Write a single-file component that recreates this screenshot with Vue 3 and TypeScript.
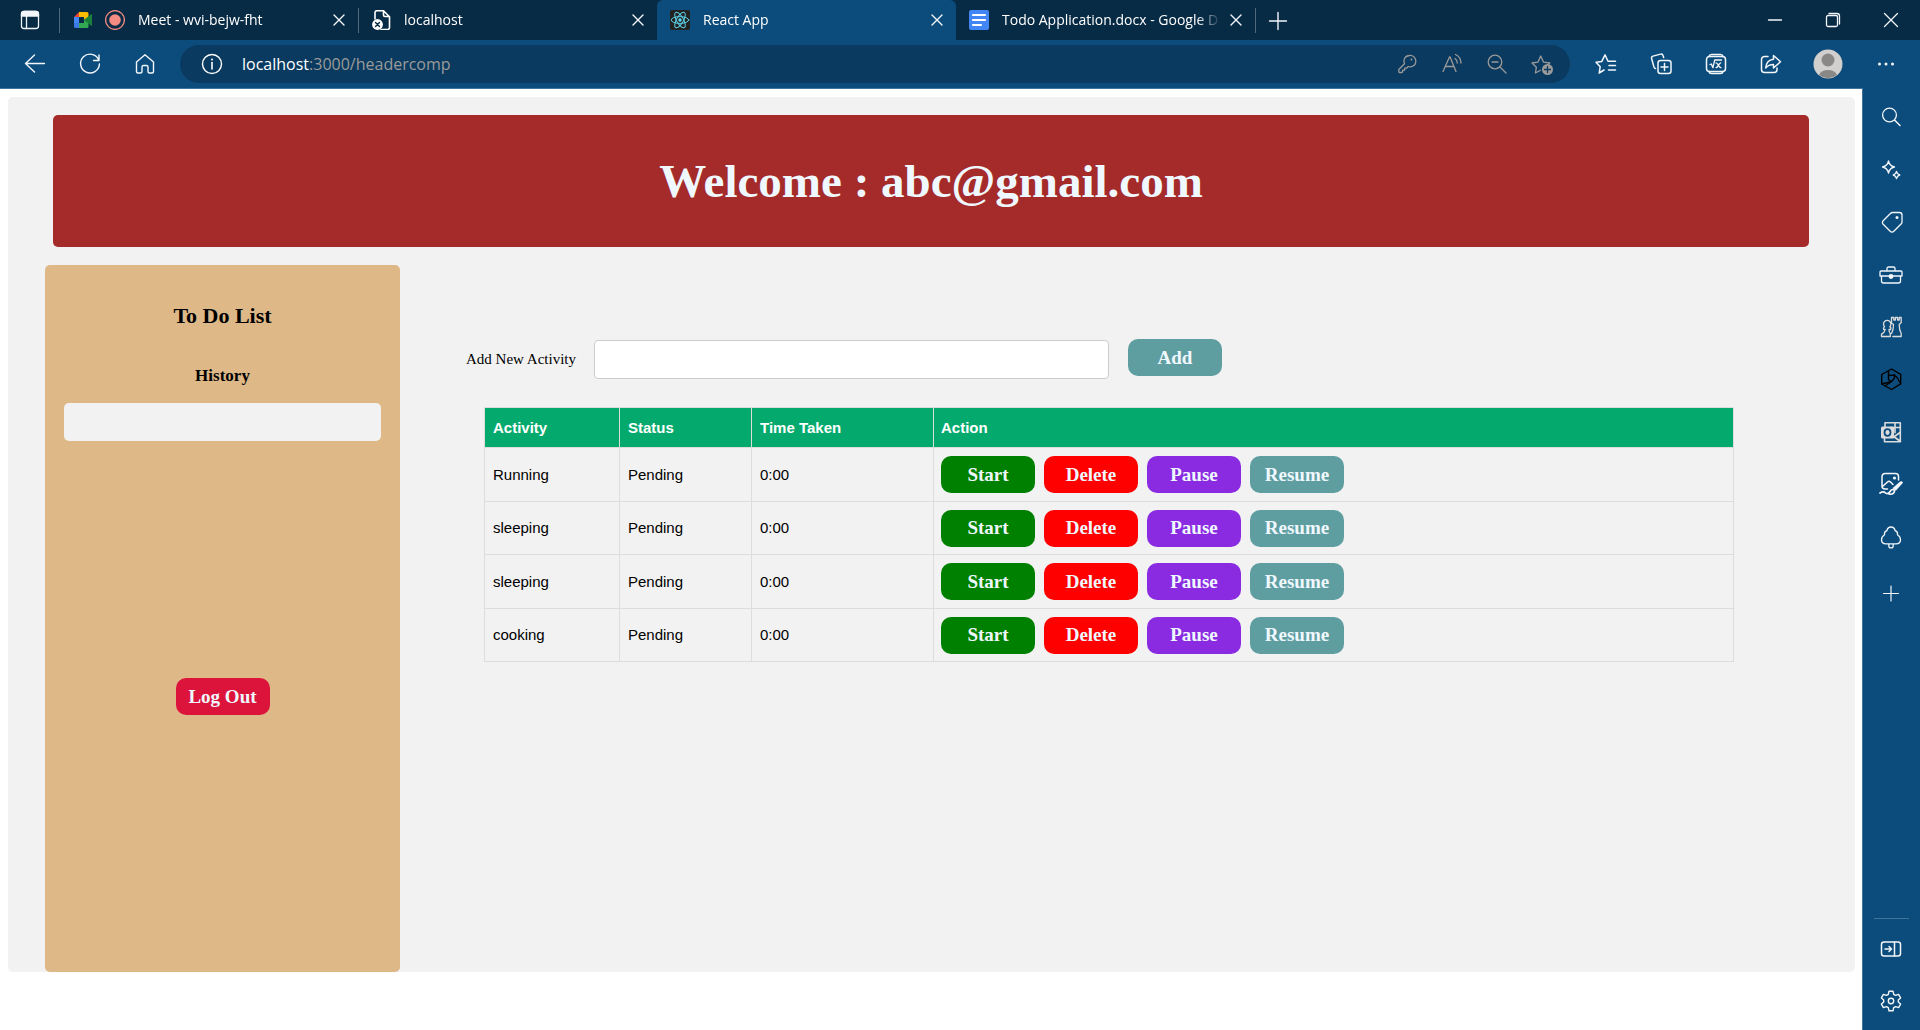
<script setup lang="ts">
import { ref } from 'vue'

interface Tab {
  title: string
  icons: string[]
  active?: boolean
}

interface Tool {
  name: string
  label: string
}

interface Activity {
  id: number
  name: string
  status: string
  time: string
}

const tabs: Tab[] = [
  { title: 'Meet - wvi-bejw-fht', icons: ['meet', 'record'] },
  { title: 'localhost', icons: ['fileError'] },
  { title: 'React App', icons: ['react'], active: true },
  { title: 'Todo Application.docx - Google D', icons: ['docs'] },
]

const windowTools: Tool[] = [
  { name: 'minimize', label: 'Minimize' },
  { name: 'restore', label: 'Restore' },
  { name: 'closeWindow', label: 'Close window' },
]

const navTools: Tool[] = [
  { name: 'back', label: 'Back' },
  { name: 'refresh', label: 'Refresh' },
  { name: 'home', label: 'Home' },
]

const addressTools: Tool[] = [
  { name: 'key', label: 'Saved passwords' },
  { name: 'readAloud', label: 'Read aloud' },
  { name: 'zoomOut', label: 'Zoom' },
  { name: 'starAdd', label: 'Add to favorites' },
]

const toolbarTools: Tool[] = [
  { name: 'favorites', label: 'Favorites' },
  { name: 'collections', label: 'Collections' },
  { name: 'math', label: 'Math solver' },
  { name: 'share', label: 'Share' },
]

const sideTools: Tool[] = [
  { name: 'search', label: 'Search' },
  { name: 'sparkle', label: 'Discover' },
  { name: 'tag', label: 'Shopping' },
  { name: 'toolbox', label: 'Tools' },
  { name: 'chess', label: 'Games' },
  { name: 'hexagon', label: 'Microsoft 365' },
  { name: 'outlook', label: 'Outlook' },
  { name: 'image', label: 'Image creator' },
  { name: 'tree', label: 'E-tree' },
]

const activities = ref<Activity[]>([
  { id: 1, name: 'Running', status: 'Pending', time: '0:00' },
  { id: 2, name: 'sleeping', status: 'Pending', time: '0:00' },
  { id: 3, name: 'sleeping', status: 'Pending', time: '0:00' },
  { id: 4, name: 'cooking', status: 'Pending', time: '0:00' },
])

const newActivity = ref('')

function addActivity() {
  const name = newActivity.value.trim()
  if (!name) return
  activities.value.push({ id: Date.now(), name, status: 'Pending', time: '0:00' })
  newActivity.value = ''
}

function setStatus(item: Activity, status: string) {
  item.status = status
}

function removeActivity(id: number) {
  activities.value = activities.value.filter((item) => item.id !== id)
}

/* Icon shapes on a 24 x 24 grid, stroked in the current text colour. */
const icons: Record<string, string> = {
  tabMenu:
    '<rect x="3.5" y="3.5" width="17" height="17" rx="2.5"/><path d="M3.5 6.5a3 3 0 0 1 3-3h11a3 3 0 0 1 3 3V8h-17z" fill="currentColor"/><path d="M8.500 8v12.500"/>',
  meet:
    '<g stroke="none"><path d="M4 9l5-5v5z" fill="#ea4335"/><path d="M9 4h8a1.500 1.500 0 0 1 1.500 1.500V9L14 12V9H9z" fill="#fbbc04"/><path d="M4 9h5v6H4z" fill="#4285f4"/><path d="M4 15h5v5H5.500A1.500 1.500 0 0 1 4 18.500z" fill="#3b78e7"/><path d="M9 15h5v-3l4.500-3.500v10A1.500 1.500 0 0 1 17 20H9z" fill="#34a853"/><path d="M18.500 8.500l2.700-2.200c.5-.4 1.300-.1 1.300.6v10.200c0 .7-.8 1-1.300.6l-2.700-2.200L14 12z" fill="#188038"/></g>',
  record:
    '<circle cx="12" cy="12" r="9.400" stroke="#f28b82" stroke-width="1.300"/><circle cx="12" cy="12" r="5.800" fill="#f28b82" stroke="none"/>',
  fileError:
    '<path d="M6 11V4.500A2 2 0 0 1 8 2.700h6.500l6 6V19.500a2 2 0 0 1-2 2H12M14.500 2.700V7a1.500 1.500 0 0 0 1.500 1.500h4.500" stroke-width="1.600"/><circle cx="8.500" cy="16.500" r="5.400" fill="currentColor" stroke="none"/><path d="M6.500 14.500l4 4m0-4l-4 4" stroke="#072a45" stroke-width="1.400"/>',
  react:
    '<rect x="2" y="2" width="20" height="20" rx="2" fill="#222" stroke="none"/><g stroke="#5ccfe6" stroke-width="1"><ellipse cx="12" cy="12" rx="8.800" ry="3.400"/><ellipse cx="12" cy="12" rx="8.800" ry="3.400" transform="rotate(60 12 12)"/><ellipse cx="12" cy="12" rx="8.800" ry="3.400" transform="rotate(120 12 12)"/></g><circle cx="12" cy="12" r="1.700" fill="#61dafb" stroke="none"/>',
  docs:
    '<rect x="2" y="2" width="20" height="20" rx="2" fill="#4285f4" stroke="none"/><path d="M6 7h12M6 12h12M6 17h8" stroke="#fff" stroke-width="2.200"/>',
  close: '<path d="M7 7l10 10M17 7L7 17" stroke-width="1.400"/>',
  plus: '<path d="M12 3.500v17M3.500 12h17" stroke-width="1.400"/>',
  minimize: '<path d="M5.500 12h13"/>',
  restore:
    '<rect x="5.500" y="7.500" width="11" height="11" rx="1.500"/><path d="M8 5.500h8a2.500 2.500 0 0 1 2.500 2.500v8"/>',
  closeWindow: '<path d="M5.500 5.500l13 13M18.500 5.500l-13 13"/>',
  back: '<path d="M21.500 11.500H2.500M11.500 3l-9 8.500 9 8.500" stroke-width="1.400"/>',
  refresh: '<path d="M20.700 8A9.400 9.400 0 1 0 21.400 12M21 3v5.500h-5.500" stroke-width="1.400"/>',
  home:
    '<path d="M3.500 10L12 2.800 20.500 10v9.500a1.500 1.500 0 0 1-1.500 1.500h-2.500a1.500 1.500 0 0 1-1.500-1.500V15a1.500 1.500 0 0 0-1.500-1.500h-3A1.500 1.500 0 0 0 9 15v4.500A1.500 1.500 0 0 1 7.500 21H5a1.500 1.500 0 0 1-1.500-1.500z" stroke-width="1.400"/>',
  info:
    '<circle cx="12" cy="12" r="9.500" stroke-width="1.400"/><path d="M12 10.500V17" stroke-width="1.600"/><circle cx="12" cy="7.500" r="1" fill="currentColor" stroke="none"/>',
  key:
    '<path d="M14.500 3.500a5.700 5.700 0 1 1-1.300 11l-1.700 1.700H9.700v2H7.600v1.600c0 .4-.3.700-.7.700H4.500a.7.700 0 0 1-.7-.7v-2.300l5.700-5.700A5.700 5.700 0 0 1 14.500 3.500z"/><circle cx="16.500" cy="7.500" r="1" fill="currentColor" stroke="none"/>',
  readAloud:
    '<path d="M3 19.500L9.500 5h.6L16 19.500M5.300 14.500h8.700M15 6.500c1.400.9 2.300 2.400 2.300 4.500M15.500 2.500c3.200 1.500 5.300 4.500 5.500 8.500"/>',
  zoomOut: '<circle cx="10" cy="10" r="6.800"/><path d="M15 15l6 6M7 10h6"/>',
  starAdd:
    '<path d="M10.500 18.300L5.400 21l1-5.800L2 11l6-.9L10.700 4l2.800 6.100 6.300.9-1.500 1.400"/><circle cx="17.500" cy="17.500" r="5.500" fill="currentColor" stroke="none"/><path d="M17.500 14.500v6M14.500 17.500h6" stroke="#0a3a5f"/>',
  favorites:
    '<path d="M10 18l-4.800 3 1-6.300L2 10.300l5.800-.9L11 2.800l3 6.400h7.500M15 13.500h6.500M14.500 18h7" stroke-width="1.500"/>',
  collections:
    '<path d="M6.500 16.500a2 2 0 0 1-1.500-1.400L2.600 6.500A2 2 0 0 1 4 4.100l7.500-2a2 2 0 0 1 2.500 1.400l.7 2" stroke-width="1.500"/><rect x="9" y="8.500" width="13" height="13" rx="2.500" stroke-width="1.500"/><path d="M15.500 11.500v7M12 15h7" stroke-width="1.500"/>',
  math:
    '<rect x="2.500" y="4.500" width="19" height="15" rx="3" stroke-width="1.500"/><path d="M5 4.500C5.300 3 6 2.500 7.500 2.500h9c1.500 0 2.200.5 2.500 2M5 19.500c.3 1.500 1 2 2.500 2h9c1.500 0 2.200-.5 2.500-2" stroke-width="1.500"/><path d="M6 12.500l1.300-.5 1.600 3.700 1.800-7.700h6.800M12 10.800c2.200 0 2.500 4.800 5 4.800M16.800 10.800c-2.200 0-2.300 4.800-4.800 4.800" stroke-width="1.300"/>',
  share:
    '<path d="M9 4.500H5.500a3 3 0 0 0-3 3v10a3 3 0 0 0 3 3H15a3 3 0 0 0 3-3V16M14.500 3.500l7 6.300-7 6.200v-3.600c-3.500 0-5.800 1-7.800 3.600.4-4.800 2.800-8.300 7.800-8.800z" stroke-width="1.500"/>',
  dots: '<g fill="currentColor" stroke="none"><circle cx="5.500" cy="12" r="1.500"/><circle cx="12" cy="12" r="1.500"/><circle cx="18.500" cy="12" r="1.500"/></g>',
  search: '<circle cx="10.500" cy="10" r="6.900"/><path d="M15.500 15l5.500 5.500" stroke-width="1.500"/>',
  sparkle:
    '<path d="M9.500 3c.8 3.700 2.300 5.200 6 6-3.700.8-5.200 2.300-6 6-.8-3.700-2.300-5.200-6-6 3.700-.8 5.200-2.300 6-6zM17.500 13.500c.5 2.200 1.300 3 3.300 3.500-2 .5-2.800 1.300-3.300 3.500-.5-2.200-1.300-3-3.300-3.500 2-.5 2.800-1.300 3.300-3.500z"/>',
  tag:
    '<path d="M13.500 2.500h7a2.500 2.500 0 0 1 2.500 2.500v7a2.500 2.500 0 0 1-.7 1.800l-7.500 7.500a2.500 2.500 0 0 1-3.600 0l-7-7a2.500 2.500 0 0 1 0-3.600l7.500-7.500a2.500 2.500 0 0 1 1.800-.7z"/><circle cx="18" cy="7.500" r="1.500" fill="currentColor" stroke="none"/>',
  toolbox:
    '<path d="M8 8V5.500A1.500 1.500 0 0 1 9.500 4h5A1.500 1.500 0 0 1 16 5.500V8M2 8h20a1 1 0 0 1 1 1v4H1V9a1 1 0 0 1 1-1zM2.500 13v5a2 2 0 0 0 2 2h15a2 2 0 0 0 2-2v-5"/><circle cx="12" cy="13.500" r="1.800" fill="currentColor"/>',
  chess:
    '<path d="M6.200 14.500H4.600c-.5-1.300.1-2.300 1-2.800a3.700 3.700 0 1 1 5.200 0c1 .5 1.300 1.500.8 2.800H10c0 2 .5 3.200 1.300 4v3H2.500v-2.300c2-1 3.300-2.500 3.700-4.700zM12.500 5v3l2 1.500c0 3.500-.5 6.500-2 9M12.500 5V2.500h2.300V5h1.600V2.500h2.200V5h1.600V2.500h2V7.500l-2 2c0 3.500.5 6.500 2 9v3h-8.400" stroke="#dcdcdc" stroke-width="1.300"/>',
  hexagon:
    '<g stroke="#000" stroke-width="1.400"><path d="M12.500 2l9.200 5.300v9.500L12.500 22.500 2.700 17V7.500zM9.500 3.700v8.800l3 2.200M9.500 8.500l6-.5 3 3 3 5.500M2.700 17l10-2.500 2.700-3.500V8M6 19l6.500-4.500"/></g>',
  outlook:
    '<path d="M6 7V2.700h15.300v19H5.500V17M12 7.500h9M16 2.700v10M14 17.500l7-5M14 16l7.500 5.500" stroke="#dcdcdc" stroke-width="1.600"/><rect x="2" y="6.500" width="13" height="12" rx="1.500" fill="#dcdcdc" stroke="none"/><ellipse cx="8.500" cy="12.500" rx="3" ry="3.300" stroke="#0c4c7c" stroke-width="1.800"/>',
  image:
    '<path d="M8.500 17H6a3 3 0 0 1-3-3V4.500a3 3 0 0 1 3-3h10.500a3 3 0 0 1 3 3V8M3.500 14.500l5-4.500c1-.9 2-.9 3 0l2.500 2.500" stroke-width="1.500"/><circle cx="15.500" cy="6" r="1.600" fill="currentColor" stroke="none"/><path d="M22.300 9.300c1 .1 1.800.8 1.500 1.700l-7 7.800-3.300-2.600 7.300-6.400c.4-.4.9-.6 1.500-.5z" fill="currentColor" stroke="none"/><path d="M1 21c2.500-1.500 4.500-1 5.500 0s3 .5 4-.8 1.500-2.700 3.300-2.700c1.500 0 2 1.700 1.200 3-1 1.600-3.500 2-5.500 1.200" stroke-width="1.700"/>',
  tree:
    '<path d="M12 2c-2 0-3.500 1.200-4.200 3.700-2 .8-2.600 2.300-2.300 4C3.500 11 2.500 13 2.500 14.700c0 2.500 2 4.100 4.500 4.100h10c2.500 0 4.500-1.600 4.500-4.100 0-1.700-1-3.700-3-5 .3-1.700-.3-3.200-2.300-4C15.500 3.200 14 2 12 2zM9.800 19v1.700a2 2 0 0 0 4.400 0V19"/>',
  addTool: '<path d="M12 5v15M4.500 12.500h15" stroke-width="1.200"/>',
  panel:
    '<rect x="2.500" y="5" width="19" height="14" rx="2.500" stroke-width="1.500"/><path d="M15.500 5v14M6 12h6.500M10 9.500l2.500 2.500-2.500 2.500" stroke-width="1.500"/>',
  gear:
    '<circle cx="12" cy="12" r="2.700" stroke-width="1.400"/><path d="M10 2.200h4l.7 3.100 1.900 1.100 3-1 2 3.500-2.300 2.100v2l2.300 2.100-2 3.500-3-1-1.900 1.100-.7 3.100h-4l-.7-3.100-1.900-1.100-3 1-2-3.500L4.700 13v-2L2.400 8.900l2-3.500 3 1 1.900-1.100z" stroke-width="1.400"/>',
}
</script>

<template>
  <div class="browser">
    <nav class="tab-bar" aria-label="Tabs">
      <button class="icon-btn tab-menu" aria-label="Tab actions">
        <svg viewBox="0 0 24 24" v-html="icons.tabMenu"></svg>
      </button>
      <div v-for="tab in tabs" :key="tab.title" class="tab" :class="{ active: tab.active }">
        <svg v-for="name in tab.icons" :key="name" class="tab-icon" viewBox="2 2 20 20" v-html="icons[name]"></svg>
        <span class="tab-title">{{ tab.title }}</span>
        <button class="icon-btn tab-close" :aria-label="'Close ' + tab.title">
          <svg viewBox="0 0 24 24" v-html="icons.close"></svg>
        </button>
      </div>
      <button class="icon-btn new-tab" aria-label="New tab">
        <svg viewBox="0 0 24 24" v-html="icons.plus"></svg>
      </button>
      <div class="window-tools">
        <button v-for="tool in windowTools" :key="tool.name" class="icon-btn wide" :aria-label="tool.label">
          <svg viewBox="0 0 24 24" v-html="icons[tool.name]"></svg>
        </button>
      </div>
    </nav>

    <div class="toolbar">
      <button v-for="tool in navTools" :key="tool.name" class="icon-btn medium" :aria-label="tool.label">
        <svg viewBox="0 0 24 24" v-html="icons[tool.name]"></svg>
      </button>
      <div class="address">
        <svg viewBox="0 0 24 24" v-html="icons.info"></svg>
        <span class="url">localhost<span class="url-rest">:3000/headercomp</span></span>
        <button v-for="tool in addressTools" :key="tool.name" class="icon-btn muted" :aria-label="tool.label">
          <svg viewBox="0 0 24 24" v-html="icons[tool.name]"></svg>
        </button>
      </div>
      <button v-for="tool in toolbarTools" :key="tool.name" class="icon-btn medium" :aria-label="tool.label">
        <svg viewBox="0 0 24 24" v-html="icons[tool.name]"></svg>
      </button>
      <button class="icon-btn profile" aria-label="Profile">
        <svg class="avatar" viewBox="0 0 30 30">
          <circle cx="15" cy="15" r="14.500" fill="#d2d0ce" stroke="none" />
          <path d="M6 26a9.500 7.500 0 0 1 18 0 14.500 14.500 0 0 1-18 0z" fill="#8a8886" stroke="none" />
          <circle cx="15" cy="11" r="6.500" fill="#8a8886" stroke="none" />
        </svg>
      </button>
      <button class="icon-btn medium" aria-label="More">
        <svg viewBox="0 0 24 24" v-html="icons.dots"></svg>
      </button>
    </div>

    <div class="body">
      <div class="viewport">
        <main class="page">
          <header class="banner">
            <h1>Welcome : abc@gmail.com</h1>
          </header>
          <div class="columns">
            <aside class="panel">
              <h2>To Do List</h2>
              <h3>History</h3>
              <div class="history"></div>
              <button class="btn logout">Log Out</button>
            </aside>
            <section class="content">
              <form class="add-form" @submit.prevent="addActivity">
                <label for="activity">Add New Activity</label>
                <input id="activity" v-model="newActivity" type="text" />
                <button class="btn teal" type="submit">Add</button>
              </form>
              <table>
                <thead>
                  <tr>
                    <th class="col-activity">Activity</th>
                    <th class="col-status">Status</th>
                    <th class="col-time">Time Taken</th>
                    <th>Action</th>
                  </tr>
                </thead>
                <tbody>
                  <tr v-for="item in activities" :key="item.id">
                    <td>{{ item.name }}</td>
                    <td>{{ item.status }}</td>
                    <td>{{ item.time }}</td>
                    <td>
                      <div class="actions">
                        <button class="btn green" @click="setStatus(item, 'Ongoing')">Start</button>
                        <button class="btn red" @click="removeActivity(item.id)">Delete</button>
                        <button class="btn violet" @click="setStatus(item, 'Paused')">Pause</button>
                        <button class="btn teal" @click="setStatus(item, 'Ongoing')">Resume</button>
                      </div>
                    </td>
                  </tr>
                </tbody>
              </table>
            </section>
          </div>
        </main>
      </div>

      <nav class="side-bar" aria-label="Sidebar">
        <div class="side-apps">
          <button v-for="tool in sideTools" :key="tool.name" class="icon-btn" :aria-label="tool.label">
            <svg viewBox="0 0 24 24" v-html="icons[tool.name]"></svg>
          </button>
        </div>
        <button class="icon-btn add-tool" aria-label="Add to sidebar">
          <svg viewBox="0 0 24 24" v-html="icons.addTool"></svg>
        </button>
        <div class="side-end">
          <button class="icon-btn" aria-label="Hide sidebar">
            <svg viewBox="0 0 24 24" v-html="icons.panel"></svg>
          </button>
          <button class="icon-btn" aria-label="Settings">
            <svg viewBox="0 0 24 24" v-html="icons.gear"></svg>
          </button>
        </div>
      </nav>
    </div>
  </div>
</template>

<style>
body {
  margin: 0;
}
</style>

<style scoped>
* {
  box-sizing: border-box;
}

.browser {
  display: flex;
  flex-direction: column;
  min-height: 100vh;
  background: #0c4c7c;
  color: #fff;
  font-family: "Open Sans", sans-serif;
}

svg {
  flex: none;
  width: 24px;
  height: 24px;
  fill: none;
  stroke: currentColor;
  stroke-width: 1.3;
  stroke-linecap: round;
  stroke-linejoin: round;
}

.icon-btn {
  display: flex;
  align-items: center;
  justify-content: center;
  flex: none;
  width: 45px;
  padding: 0;
  border: 0;
  background: none;
  color: #f2f6fa;
}

.icon-btn.medium {
  width: 55px;
}

.icon-btn.wide {
  width: 58px;
}

.icon-btn.profile {
  width: 60px;
}

.icon-btn.muted {
  color: #9a9a9a;
}

/* Tab strip */
.tab-bar {
  display: flex;
  height: 40px;
  background: #072a45;
}

.tab-menu {
  width: 59px;
}

.tab {
  position: relative;
  display: flex;
  align-items: center;
  gap: 13px;
  flex: 0 1 299px;
  min-width: 0;
  padding: 0 9px 0 13px;
}

.tab::before {
  content: "";
  position: absolute;
  left: 0;
  top: 8px;
  width: 1px;
  height: 25px;
  background: #51697c;
}

.tab.active {
  border-radius: 6px 6px 0 0;
  background: #0c4c7c;
}

.tab.active::before,
.tab.active + .tab::before {
  display: none;
}

.tab-icon {
  width: 20px;
  height: 20px;
}

.tab-title {
  flex: 1;
  overflow: hidden;
  margin-right: -8px;
  font-size: 14px;
  line-height: 20px;
  white-space: nowrap;
  mask-image: linear-gradient(to right, #000 calc(100% - 24px), transparent);
}

.tab-close {
  width: 20px;
}

.new-tab {
  border-left: 1px solid #51697c;
  height: 25px;
  margin-top: 8px;
}

.window-tools {
  display: flex;
  margin-left: auto;
}

/* Address row */
.toolbar {
  display: flex;
  align-items: center;
  height: 48px;
  padding: 0 7px;
}

.address {
  display: flex;
  align-items: center;
  flex: 1;
  height: 38px;
  margin: 0 8px;
  padding: 0 6px 0 20px;
  border-radius: 19px;
  background: #0a3a5f;
}

.url {
  flex: 1;
  padding-left: 18px;
  font-size: 16px;
  line-height: 24px;
}

.url-rest {
  color: #9a9a9a;
}

.avatar {
  width: 30px;
  height: 30px;
}

/* Web page */
.body {
  display: flex;
  flex: 1;
}

.viewport {
  flex: 1;
  min-width: 0;
  padding: 8px 7px 8px 8px;
  border: solid #41749a;
  border-width: 1px 1px 0 0;
  background: #fff;
  color: #000;
  font-family: "Liberation Serif", serif;
}

.page {
  padding-top: 18px;
  border-radius: 5px;
  background: #f2f2f2;
}

.banner {
  margin: 0 46px 18px 45px;
  padding: 39px;
  border-radius: 5px;
  background: brown;
  color: aliceblue;
  text-align: center;
}

h1,
h2,
h3 {
  margin: 0;
}

h1 {
  font-size: 47px;
  line-height: 54px;
}

.columns {
  display: flex;
}

.panel {
  display: flex;
  flex-direction: column;
  align-items: center;
  flex: none;
  width: 355px;
  min-height: 707px;
  margin-left: 37px;
  padding: 38px 19px;
  border-radius: 5px;
  background: burlywood;
}

h2 {
  font-size: 22px;
  line-height: 26px;
}

h3 {
  margin: 37px 0 17px;
  font-size: 17px;
  line-height: 20px;
}

.history {
  align-self: stretch;
  height: 38px;
  border-radius: 5px;
  background: #f2f2f2;
}

.btn {
  width: 94px;
  height: 37px;
  padding: 0;
  border: 0;
  border-radius: 10px;
  color: aliceblue;
  font: bold 19px/22px "Liberation Serif", serif;
}

.logout {
  margin-top: 237px;
  background: crimson;
}

.teal {
  background: cadetblue;
}

.green {
  background: green;
}

.red {
  background: red;
}

.violet {
  background: blueviolet;
}

.content {
  flex: 1;
  min-width: 0;
  padding: 74px 121px 0 66px;
}

.add-form {
  display: flex;
  font-size: 15px;
  line-height: 40px;
}

.add-form input {
  width: 515px;
  height: 39px;
  margin: 1px 19px 0 18px;
  padding: 0 12px;
  border: 1px solid #ccc;
  border-radius: 4px;
  background: #fff;
  font: 15px "Liberation Serif", serif;
}

table {
  width: calc(100% - 18px);
  margin: 28px 0 0 18px;
  border-collapse: collapse;
  font-family: "Liberation Sans", sans-serif;
  font-size: 15px;
  line-height: 18px;
}

th,
td {
  padding: 7px 8px;
  border: 1px solid #ddd;
  text-align: left;
}

th {
  height: 40px;
  background: #04aa6d;
  color: #fff;
}

th:last-child,
td:last-child {
  padding-left: 7px;
}

tbody tr:nth-child(odd) {
  height: 54px;
}

tbody tr:nth-child(even) {
  height: 53px;
}

.col-activity {
  width: 135px;
}

.col-status {
  width: 132px;
}

.col-time {
  width: 182px;
}

.actions {
  display: flex;
  gap: 9px;
}

/* Browser sidebar */
.side-bar {
  display: flex;
  flex-direction: column;
  align-items: center;
  flex: none;
  width: 57px;
  padding-right: 1px;
}

.side-apps {
  display: grid;
  grid-auto-rows: 1fr;
  height: 472px;
  margin-top: 3px;
}

.add-tool {
  height: 60px;
}

.side-end {
  display: grid;
  grid-auto-rows: 52px;
  justify-content: center;
  width: 35px;
  margin: auto 0 3px;
  padding-top: 4px;
  border-top: 1px solid #41749a;
}
</style>
